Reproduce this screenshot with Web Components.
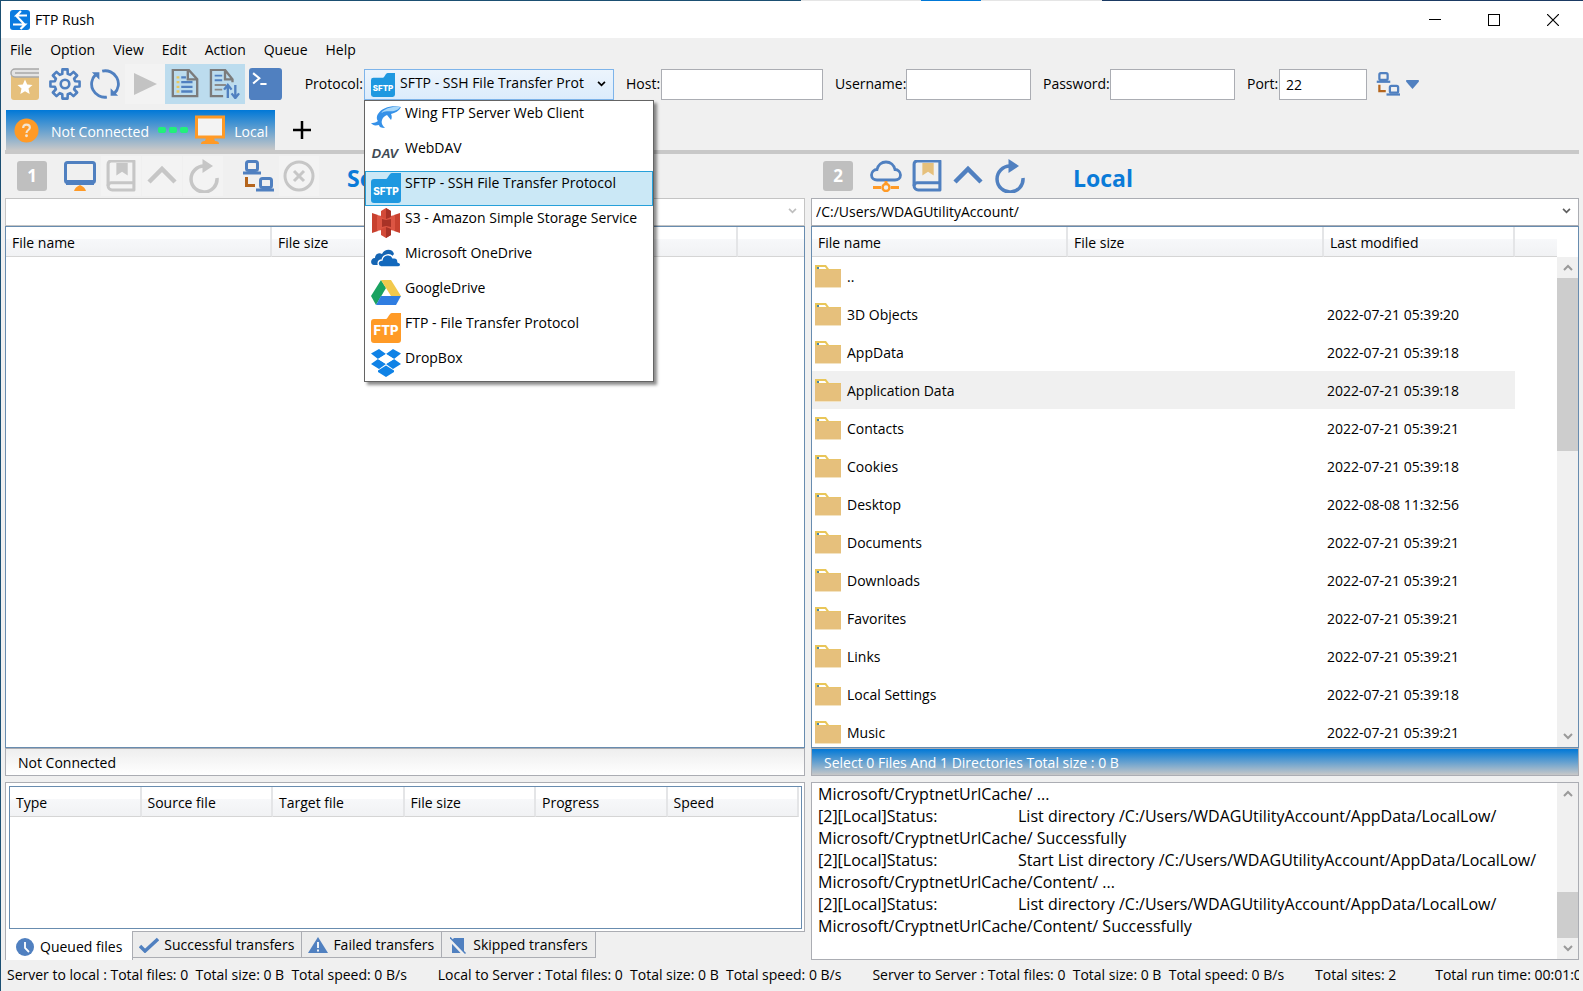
<!DOCTYPE html>
<html lang="en">
<head>
<meta charset="utf-8">
<title>FTP Rush</title>
<style>
  html, body { margin: 0; height: 100%; }
  body {
    font: 14px/20px "Open Sans", "Segoe UI", "Noto Sans", sans-serif;
    color: #000;
    background: #f0f0f0;
    overflow: hidden;
  }
</style>
</head>
<body>
<rush-window></rush-window>

<script>
const BLUE = '#5080c0', ORANGE = '#ff9a26', GREY = '#c6c6c6', TAN = '#e6c07c';

const bookmark = (c, m) => `
  <path d="M3 4a3 3 0 0 1 3-3h22v28H7a4 4 0 0 1-4-4V4z" fill="none" stroke="${c}" stroke-width="3" stroke-linejoin="round"/>
  <path d="M3 25a3 3 0 0 1 3-3h22" fill="none" stroke="${c}" stroke-width="3"/>
  <path d="M11 3h11v12l-5.500-3.500L11 15z" fill="${m}"/>`;
const reload = c => `
  <path d="M30 19a13 13 0 1 1-13-12" fill="none" stroke="${c}" stroke-width="3.500"/>
  <path d="M15.500 0l10.500 7-10.500 7z" fill="${c}"/>`;
const chevronUp = c => `<path d="M3 22L16 9l13 13" fill="none" stroke="${c}" stroke-width="4.500"/>`;
const folder = (c, label, size) => `
  <path d="M3 6h12c2 0 3-6 6-6h9v27a3 3 0 0 1-3 3H3a3 3 0 0 1-3-3V9a3 3 0 0 1 3-3z" fill="${c}"/>
  <text x="15" y="22" text-anchor="middle" font-family="Inter, sans-serif" font-weight="800" font-size="${size}" fill="#fff">${label}</text>`;
const badge = n => `
  <rect width="30" height="30" rx="3" fill="#bfbfbf"/>
  <text x="15" y="21" text-anchor="middle" font-family="Open Sans, sans-serif" font-weight="700" font-size="17" fill="#fff">${n}</text>`;
const pageShape = `<path d="M18 2H3v28h26V12L20 2h-2z" fill="none" stroke="#7b7b7b" stroke-width="2.500" transform="translate(0 -1)"/>
  <path d="M19 2v9h9" fill="none" stroke="#7b7b7b" stroke-width="2.500"/>`;

/* Outline of an eight-toothed cog centred in a 32-unit box. */
const cogPath = 'M' + Array.from({ length: 8 }, (_, i) =>
  [[-15, 10.5], [-10, 14.8], [10, 14.8], [15, 10.5]].map(([deg, r]) => {
    const a = (i * 45 + deg) * Math.PI / 180;
    return `${(16 + r * Math.sin(a)).toFixed(2)} ${(16 - r * Math.cos(a)).toFixed(2)}`;
  }).join('L')).join('L') + 'z';

/* name: [viewBox width, viewBox height, markup] */
const ICONS = {
  logo: [20, 20, `<rect width="20" height="20" rx="3" fill="#0a7be0"/>
    <path d="M17 5.500H6.500L11 1M6 5.500l8.500 9M3 14.500H15L10.500 19" fill="none" stroke="#fff" stroke-width="2.200"/>`],
  book: [32, 32, `<path d="M2 7h28v22a3 3 0 0 1-3 3H5a3 3 0 0 1-3-3z" fill="${TAN}"/>
    <path d="M30 1H6a4 4 0 0 0 0 8h24M30 5H6" fill="#e4e4e4" stroke="#a8a8a8" stroke-width="1.500"/>
    <path d="M16 11.500l2.200 5 5.300.500-4 3.600 1.200 5.400-4.700-2.800-4.700 2.800 1.200-5.400-4-3.600 5.300-.500z" fill="#fff"/>`],
  gear: [32, 32, `<path d="${cogPath}" fill="none" stroke="${BLUE}" stroke-width="2.600" stroke-linejoin="round"/>
    <circle cx="16" cy="16" r="4.300" fill="none" stroke="${BLUE}" stroke-width="2.600"/>`],
  sync: [32, 32, `<path d="M6 6A14 14 0 0 0 18 29.900M26 26A14 14 0 0 0 13 2.300" fill="none" stroke="${BLUE}" stroke-width="3"/>
    <path d="M2 3.500h8v8zM30 28.500h-8v-8z" fill="${BLUE}"/>`],
  play: [32, 32, `<path d="M5 5l23 11L5 27z" fill="#c3c3c3"/>`],
  list: [32, 32, `${pageShape}
    <path d="M7 9h3M7 14h3M7 19h3M7 24h3" stroke="#e8c860" stroke-width="2.500"/>
    <path d="M12 9h5M12 14h12M12 19h12M12 24h12" stroke="${BLUE}" stroke-width="2.500"/>`],
  listSort: [36, 32, `<path d="M16 29H3V1h15l8 10v3M18 2v9h8" fill="none" stroke="#7b7b7b" stroke-width="2.500"/>
    <path d="M7 7h8M7 12h8" stroke="${BLUE}" stroke-width="2"/><path d="M7 17h12M7 22h8" stroke="#8b8b8b" stroke-width="2"/>
    <path d="M21 31V18M17 22l4-5 4 5M29 17v13M25 26l4 5 4-5" fill="none" stroke="${BLUE}" stroke-width="2.500"/>`],
  terminal: [32, 32, `<rect width="32" height="31" rx="3" fill="${BLUE}"/>
    <path d="M4 5l6 5-6 5M11 15.500h6" fill="none" stroke="#fff" stroke-width="2"/>`],
  connect: [32, 32, `<g fill="none" stroke="${BLUE}" stroke-width="3">
    <rect x="4.500" y="1.500" width="11" height="9" rx="2"/><path d="M1 13h18"/>
    <rect x="18.500" y="18.500" width="11" height="9" rx="2"/><path d="M14 30h18"/></g>
    <path d="M4.500 17v8.500H13" fill="none" stroke="#b5651d" stroke-width="3"/>`],
  caret: [14, 10, `<path d="M0 0h14v2L7 10 0 2z" fill="${BLUE}"/>`],
  question: [26, 26, `<circle cx="13" cy="13" r="12.500" fill="${ORANGE}"/>
    <path d="M9.500 10.500c0-5 7-4.500 7-.500 0 2.500-3.500 2.500-3.500 5.500" fill="none" stroke="#f3e4d0" stroke-width="2.200"/><circle cx="13" cy="18.500" r="1.500" fill="#f3e4d0"/>`],
  dashes: [30, 6, `<g fill="#22f07a"><rect width="8" height="6" rx="2"/><rect x="11" width="8" height="6" rx="2"/><rect x="22" width="8" height="6" rx="2"/></g>`],
  monitorOrange: [30, 30, `<rect x="1.500" y="2" width="27" height="20" fill="#f3f3f3" stroke="${ORANGE}" stroke-width="3"/>
    <path d="M11 23h8l1 3c3 0 4 1 4 3H6c0-2 1-3 4-3z" fill="${ORANGE}"/>`],
  plus: [18, 18, `<path d="M9 0v18M0 9h18" stroke="#000" stroke-width="2.500"/>`],
  one: [30, 30, badge(1)],
  two: [30, 30, badge(2)],
  monitor: [32, 30, `<rect x="1.500" y="1.500" width="29" height="20" rx="2" fill="none" stroke="${BLUE}" stroke-width="3"/><path d="M2 19h28v5H2z" fill="${BLUE}"/>
    <path d="M10 30q1-4 6-6 5 2 6 6z" fill="${ORANGE}"/>`],
  bookmarkOff: [31, 31, bookmark(GREY, GREY)],
  bookmark: [31, 31, bookmark(BLUE, TAN)],
  upOff: [32, 32, chevronUp(GREY)],
  up: [32, 32, chevronUp(BLUE)],
  reloadOff: [32, 34, reload(GREY)],
  reload: [32, 34, reload(BLUE)],
  cancel: [32, 32, `<circle cx="16" cy="16" r="14" fill="none" stroke="${GREY}" stroke-width="3"/><path d="M11 11l10 10M21 11L11 21" stroke="${GREY}" stroke-width="3"/>`],
  cloud: [32, 32, `<path d="M7 20c-3 0-5.500-2-5.500-5S4 9.500 7 9.500C8 5 11.500 2 16 2s8 3 9 7.500c3 0 5.500 2.500 5.500 5.500s-2.500 5-5.500 5z" fill="none" stroke="${BLUE}" stroke-width="2.800"/>
    <path d="M16 21v3M3 27.500h8M21 27.500h8" stroke="${ORANGE}" stroke-width="3"/><circle cx="16" cy="27.500" r="3.500" fill="none" stroke="${ORANGE}" stroke-width="2.500"/>`],
  folder: [26, 23, `<path d="M0 0h11l3 4h12v19H0z" fill="#e9c659"/><path d="M2 2h8l1.500 2H2z" fill="#fff"/><path d="M2 2h2v2H2z" fill="#4b87a8"/>
    <path d="M0 4.500h26V23H0z" fill="#e6c07c"/><path d="M0 22h26v1H0z" fill="#f3e3c2"/>`],
  sftp: [30, 30, folder('#1e98e0', 'SFTP', 10)],
  ftp: [30, 30, folder(ORANGE, 'FTP', 13)],
  wing: [30, 30, `<path d="M30 4C22 2 11 4 7 11c-2 3-1 6 0 7-3 2-5 2-7 2 2 2 3 3 8 2 0 2 2 3 6 3-3-3-4-5-3-8 1-3 3-4 5-5l4 5c1-2 1-4 0-6 4-1 8-3 10-7z" fill="#3591e8"/>
    <path d="M29 4c-7-1-15 1-19 6 6-3 10-1 13-2 3-1 5-2 6-4z" fill="#a8d8fa"/>`],
  dav: [30, 30, `<text x="14" y="20" text-anchor="middle" font-family="Liberation Sans, sans-serif" font-style="italic" font-weight="700" font-size="13" fill="#3f4b55">DAV</text>`],
  s3: [30, 30, `<path d="M1 5l6 2v16l-6 2zM29 5l-6 2v16l6 2z" fill="#c8412f"/><path d="M6 7l9 2 9-2v16l-9-2-9 2z" fill="#dc5543"/>
    <path d="M10 3l5-3 5 3v6l-5 2-5-2zM10 27l5 3 5-3v-6l-5-2-5 2z" fill="#d24a38"/><path d="M15 0l5 3v6l-5 2zM15 30l5-3v-6l-5-2zM11 11l4 1v6l-4 1zM15 12l5-1v8l-5-1z" fill="#a83226"/>`],
  onedrive: [30, 30, `<path d="M3 22c-4 0-4-7 1-7 0-4 4-6 7-4 3-6 11-5 12 0l-9 11z" fill="#1565b3"/>
    <path d="M10 24c-4-1-4-7 1-7 1-6 9-7 11-2 3-1 5 1 5 4 4 1 3 5 0 5z" fill="#1369bd" stroke="#fff" stroke-width="1.300"/>`],
  gdrive: [30, 30, `<path d="M10 2L0 18l5 9L15 10z" fill="#1aa260"/><path d="M10 2h10l10 16H20z" fill="#f2c94c"/><path d="M30 18l-5 9H5l5-9z" fill="#2f7de1"/>`],
  dropbox: [30, 30, `<g fill="#0f82e6"><path d="M8 1l7 5-8 5-7-5.500zM22 1l8 4.500L23 11l-8-5zM0 16l7-5 8 5-7 5zM30 16l-7-5-8 5 7 5zM7 22.500l8-5 8 5v1.500l-8 5-8-5z"/></g>
    <path d="M15 6l8 5-8 5-8-5z" fill="#fff"/>`],
  clock: [18, 18, `<circle cx="9" cy="9" r="9" fill="${BLUE}"/><path d="M9 4v6l4 4" fill="none" stroke="#fff" stroke-width="1.800"/>`],
  check: [20, 16, `<path d="M1 9l5 5L19 2" fill="none" stroke="${BLUE}" stroke-width="3.500"/>`],
  warn: [20, 16, `<path d="M10 0l10 16H0z" fill="${BLUE}"/><path d="M10 5v6M10 12.500v2" stroke="#fff" stroke-width="1.800"/>`],
  skip: [16, 17, `<path d="M4 1h10v15H2V3z" fill="${BLUE}"/><path d="M-1 1.500l15 16" stroke="#f0f0f0" stroke-width="3"/><path d="M0 .500l15.500 16" stroke="${BLUE}" stroke-width="1.500"/>`],
  down: [10, 7, `<path d="M1 1l4 4 4-4" fill="none" stroke="currentColor" stroke-width="2"/>`],
  upSmall: [10, 7, `<path d="M1 6l4-4 4 4" fill="none" stroke="currentColor" stroke-width="2"/>`],
  minimize: [12, 12, `<path d="M0 5.500h12" stroke="#000"/>`],
  maximize: [12, 12, `<rect x=".5" y=".5" width="11" height="11" fill="none" stroke="#000"/>`],
  close: [12, 12, `<path d="M0 0l12 12M12 0L0 12" stroke="#000" stroke-width="1.200"/>`],
};

const BASE = `*, *::before { box-sizing: border-box; }
  button, input, select { font: inherit; color: inherit; margin: 0; }
  button { border: 0; padding: 0; background: none; display: flex; align-items: center; justify-content: center; }`;

function element(name, css, html) {
  customElements.define(name, class extends HTMLElement {
    constructor() {
      super();
      const root = this.attachShadow({ mode: 'open' });
      const t = document.createElement('template');
      this.render = () => {
        t.innerHTML = `<style>${BASE}${css}</style>${typeof html === 'function' ? html(this) : html}`;
        root.replaceChildren(t.content.cloneNode(true));
      };
    }
    connectedCallback() { this.render(); }
  });
}

element('rush-icon', `
  :host { display: block; flex: none; }
  svg { display: block; }`,
  el => {
    const [w, h, body] = ICONS[el.getAttribute('name')];
    const width = +(el.getAttribute('width') || w);
    return `<svg width="${width}" height="${Math.round(h * width / w)}" viewBox="0 0 ${w} ${h}" aria-hidden="true">${body}</svg>`;
  });

element('rush-titlebar', `
  :host { display: flex; align-items: center; height: 37px; padding: 0 1px 0 9px; background: #fff; }
  h1 { font: inherit; margin: 0 auto 0 5px; }
  button { width: 59px; height: 36px; }`,
  `<rush-icon name="logo"></rush-icon><h1>FTP Rush</h1>
   <button aria-label="Minimize"><rush-icon name="minimize"></rush-icon></button>
   <button aria-label="Maximize"><rush-icon name="maximize"></rush-icon></button>
   <button aria-label="Close"><rush-icon name="close"></rush-icon></button>`);

element('rush-menubar', `
  :host { display: flex; height: 24px; }
  button { padding: 0 9px; }`,
  ['File', 'Option', 'View', 'Edit', 'Action', 'Queue', 'Help'].map(t => `<button>${t}</button>`).join(''));

element('tool-button', `
  :host { display: block; flex: none; width: var(--w, 40px); height: 40px; }
  button { width: 100%; height: 100%; }
  :host([pressed]) button { background: #bcdcee; }
  button:disabled { background: #f3f3f3; }`,
  el => `<button aria-label="${el.getAttribute('label')}" ${el.hasAttribute('disabled') ? 'disabled' : ''} ${el.hasAttribute('pressed') ? 'aria-pressed="true"' : ''}><rush-icon name="${el.getAttribute('icon')}" width="${el.getAttribute('size') || 32}"></rush-icon></button>`);

element('rush-field', `
  :host { display: flex; align-items: center; flex: none; gap: 1px; }
  label { width: var(--label); text-align: right; white-space: nowrap; }
  input { width: var(--field); height: 31px; border: 1px solid #abadb3; background: #fff; padding: 0 6px; outline: 0; }`,
  el => `<label for="f">${el.getAttribute('label')}</label><input id="f" type="${el.getAttribute('type') || 'text'}" value="${el.getAttribute('value') || ''}">`);

const PROTOCOLS = [['wing', 'Wing FTP Server Web Client'], ['dav', 'WebDAV'], ['sftp', 'SFTP - SSH File Transfer Protocol'],
  ['s3', 'S3 - Amazon Simple Storage Service'], ['onedrive', 'Microsoft OneDrive'], ['gdrive', 'GoogleDrive'],
  ['ftp', 'FTP - File Transfer Protocol'], ['dropbox', 'DropBox']];

element('protocol-picker', `
  :host { display: flex; align-items: center; flex: none; gap: 1px; }
  label { width: 59px; text-align: right; white-space: nowrap; }
  .box { position: relative; width: 250px; height: 31px; }
  select { appearance: none; width: 100%; height: 31px; border: 1px solid #7eb4ea; border-radius: 0; outline: 0;
    padding: 0 20px 2px 35px; background: linear-gradient(#ecf4fc, #dcecfc); }
  .box > rush-icon { position: absolute; left: 7px; top: 4px; pointer-events: none; }
  .box > .arrow { left: auto; right: 8px; top: 12px; }
  ul { position: absolute; z-index: 5; left: 0; top: 31px; width: 290px; margin: 0; padding: 0; list-style: none;
    background: #fff; border: 1px solid #646464; box-shadow: 3px 3px 3px rgba(0,0,0,.45); }
  li { display: flex; gap: 4px; height: 35px; padding: 2px 6px; white-space: nowrap; border: 0 solid #26a0da; }
  li[aria-selected=true] { background: #cbe8f6; border-width: 1px; padding: 1px 5px; }`,
  `<label for="p">Protocol:</label>
   <div class="box">
     <select id="p"><option>SFTP - SSH File Transfer Prot</option></select>
     <rush-icon name="sftp" width="24"></rush-icon><rush-icon class="arrow" name="down" width="9"></rush-icon>
     <ul role="listbox" aria-label="Protocols">${PROTOCOLS.map(([i, t]) =>
       `<li role="option" aria-selected="${i === 'sftp'}"><rush-icon name="${i}"></rush-icon><span>${t}</span></li>`).join('')}</ul>
   </div>`);

element('rush-toolbar', `
  :host { display: flex; align-items: center; height: 40px; margin-top: 2px; padding-left: 4px; }
  .tools { display: flex; margin-right: 19px; }
  .fields { display: flex; gap: 12px; margin-right: 9px; }
  .connect { gap: 6px; }`,
  `<div class="tools">
     <tool-button icon="book" label="Site manager"></tool-button>
     <tool-button icon="gear" label="Settings"></tool-button>
     <tool-button icon="sync" label="Synchronize" size="30"></tool-button>
     <tool-button icon="play" label="Start" disabled></tool-button>
     <tool-button icon="list" label="Log" pressed size="30"></tool-button>
     <tool-button icon="listSort" label="Transfer queue" pressed size="34"></tool-button>
     <tool-button icon="terminal" label="Console" size="33"></tool-button>
   </div>
   <div class="fields">
     <protocol-picker></protocol-picker>
     <rush-field label="Host:" style="--label:34px;--field:162px"></rush-field>
     <rush-field label="Username:" style="--label:70px;--field:125px"></rush-field>
     <rush-field label="Password:" type="password" style="--label:66px;--field:125px"></rush-field>
     <rush-field label="Port:" value="22" style="--label:31px;--field:88px"></rush-field>
   </div>
   <button class="connect" aria-label="Connect"><rush-icon name="connect" width="24"></rush-icon><rush-icon name="caret" width="13"></rush-icon></button>`);

element('session-tabs', `
  :host { display: flex; height: 44px; margin: 6px 4px 0; border-bottom: 4px solid #c8c8c8; }
  .tab { color: #fff; background: linear-gradient(#0078d7, #c8c8c8); height: 40px; width: 269px; margin-left: 1px; padding: 0 7px 0 8px; justify-content: flex-start; }
  .tab span { line-height: 20px; padding-top: 3px; }
  .tab span:first-of-type { margin: 0 auto 0 12px; }
  .tab span:last-of-type { margin-left: auto; }
  .add { width: 54px; }`,
  `<button class="tab"><rush-icon name="question" width="25"></rush-icon><span>Not Connected</span>
     <rush-icon name="dashes"></rush-icon><rush-icon name="monitorOrange" style="margin-left:7px"></rush-icon><span>Local</span></button>
   <button class="add" aria-label="New tab"><rush-icon name="plus"></rush-icon></button>`);

element('pane-toolbar', `
  :host { display: flex; align-items: center; height: 44px; gap: 1px; }
  .no { margin: 0 12px 0 12px; }
  ::slotted(h2) { margin: 0; font-size: 23px; line-height: 30px; font-weight: 700; color: #0a7bd8; padding-top: 3px; }`,
  el => `<rush-icon class="no" name="${el.getAttribute('no')}"></rush-icon><slot></slot>`);

element('path-box', `
  :host { display: block; position: relative; height: 28px; color: #000; }
  select { appearance: none; width: 100%; height: 28px; border: 1px solid #abadb3; border-radius: 0; background: #fff; padding: 0 24px 0 4px; outline: 0; opacity: 1; }
  rush-icon { position: absolute; right: 8px; top: 10px; color: #606060; pointer-events: none; }
  select:disabled { border-color: #c4c4c4; }
  select:disabled + rush-icon { color: #bfbfbf; }`,
  el => `<select aria-label="Path" ${el.hasAttribute('disabled') ? 'disabled' : ''}><option>${el.getAttribute('value') || ''}</option></select><rush-icon name="down" width="9"></rush-icon>`);

element('scroll-bar', `
  :host { display: grid; width: 21px; background: #f0f0f0; color: #9a9a9a; grid-template-rows: 21px var(--before) var(--thumb) var(--after) 21px; }
  .thumb { grid-row: 3; background: #cdcdcd; }
  button:last-child { grid-row: 5; }`,
  `<button aria-label="Scroll up"><rush-icon name="upSmall"></rush-icon></button><div class="thumb"></div>
   <button aria-label="Scroll down"><rush-icon name="down"></rush-icon></button>`);

const TABLE = `
  table { border-collapse: separate; border-spacing: 0; table-layout: fixed; width: 100%; }
  th { height: 30px; padding: 3px 6px 0; font-weight: 400; text-align: left; white-space: nowrap;
    background: linear-gradient(#fff 40%, #f7f8fa 40%, #f1f2f4); border-right: 2px solid #e4e5e7; border-bottom: 1px solid #d5d5d5; }
  th:last-child { border-right: 0; }
  td { height: 38px; padding: 0 0 0 3px; white-space: nowrap; }`;

const FILES = [['..', ''], ['3D Objects', '2022-07-21 05:39:20'], ['AppData', '2022-07-21 05:39:18'], ['Application Data', '2022-07-21 05:39:18'],
  ['Contacts', '2022-07-21 05:39:21'], ['Cookies', '2022-07-21 05:39:18'], ['Desktop', '2022-08-08 11:32:56'], ['Documents', '2022-07-21 05:39:21'],
  ['Downloads', '2022-07-21 05:39:21'], ['Favorites', '2022-07-21 05:39:21'], ['Links', '2022-07-21 05:39:21'],
  ['Local Settings', '2022-07-21 05:39:18'], ['Music', '2022-07-21 05:39:21']];

element('file-list', `${TABLE}
  :host { display: grid; grid-template: 30px 1fr / 1fr auto; flex: 1; min-height: 0; overflow: hidden; background: #fff; border: 1px solid #688caf; }
  .view { grid-row: 1 / 3; overflow: hidden; min-height: 0; }
  scroll-bar { grid-row: 2; --before: 0px; --thumb: 173fr; --after: 275fr; }
  .name { display: flex; align-items: center; gap: 6px; }
  .name span { padding-top: 2px; }
  td { padding-top: 2px; }
  td:first-child { padding-top: 0; }
  tr.hot td:not(:last-child) { background: #f0f0f0; }`,
  el => {
    const local = el.hasAttribute('local');
    const cols = local ? [256, 256, 191, 0] : [266, 266, 200, 0];
    const heads = ['File name', 'File size', local ? 'Last modified' : '', ''];
    return `<div class="view"><table><colgroup>${cols.map(c => `<col${c ? ` style="width:${c}px"` : ''}>`).join('')}</colgroup>
      <thead><tr>${heads.map(h => `<th scope="col">${h}</th>`).join('')}</tr></thead>
      <tbody>${local ? FILES.map(([n, d]) => `<tr${n === 'Application Data' ? ' class="hot"' : ''}><td><div class="name"><rush-icon name="folder"></rush-icon><span>${n}</span></div></td><td></td><td>${d}</td><td></td></tr>`).join('') : ''}</tbody>
      </table></div>${local ? '<scroll-bar></scroll-bar>' : ''}`;
  });

element('pane-status', `
  :host { display: block; height: 28px; box-sizing: border-box; padding: 4px 12px 0; border: 1px solid #abadb3; background: linear-gradient(#eee, #fff); white-space: nowrap; }
  :host([active]) { color: #fff; background: linear-gradient(#0078d7, #c8c8c8); }
  `, `<slot></slot>`);

element('file-pane', `
  :host { display: flex; flex-direction: column; min-height: 0; min-width: 0; }`, `<slot></slot>`);

element('transfer-queue', `${TABLE}
  :host { display: flex; flex-direction: column; min-width: 0; }
  .frame { flex: 1; border: 1px solid #abadb3; background: #fff; padding: 3px 2px 2px 3px; }
  .list { height: 100%; border: 1px solid #688caf; padding-right: 2px; }
  th:last-child { border-right: 2px solid #e4e5e7; }
  .tabs { display: flex; align-items: flex-start; height: 28px; }
  .tabs button { height: 26px; gap: 5px; padding: 1px 7px 0 6px; border: 1px solid #abadb3; border-top: 0; margin-right: -1px; background: #ececec; white-space: nowrap; }
  .tabs button.on { height: 29px; margin-top: -1px; gap: 6px; padding: 3px 10px 0; background: #fff; border-bottom: 0; margin-right: 0; position: relative; }
  .tabs .on + button { border-left: 0; }`,
  `<div class="frame"><div class="list"><table><thead><tr>${['Type', 'Source file', 'Target file', 'File size', 'Progress', 'Speed'].map(h => `<th scope="col">${h}</th>`).join('')}</tr></thead></table></div></div>
   <div class="tabs" role="tablist">
     <button class="on" role="tab"><rush-icon name="clock"></rush-icon>Queued files</button>
     <button role="tab"><rush-icon name="check"></rush-icon>Successful transfers</button>
     <button role="tab"><rush-icon name="warn"></rush-icon>Failed transfers</button>
     <button role="tab"><rush-icon name="skip" style="margin:0 2px"></rush-icon>Skipped transfers</button>
   </div>`);

const LOG = [[null, 'Microsoft/CryptnetUrlCache/ ...'], ['[2][Local]Status:', 'List directory /C:/Users/WDAGUtilityAccount/AppData/LocalLow/'],
  [null, 'Microsoft/CryptnetUrlCache/ Successfully'], ['[2][Local]Status:', 'Start List directory /C:/Users/WDAGUtilityAccount/AppData/LocalLow/'],
  [null, 'Microsoft/CryptnetUrlCache/Content/ ...'], ['[2][Local]Status:', 'List directory /C:/Users/WDAGUtilityAccount/AppData/LocalLow/'],
  [null, 'Microsoft/CryptnetUrlCache/Content/ Successfully']];

element('log-view', `
  :host { display: grid; grid-template-columns: 1fr auto; border: 1px solid #abadb3; background: #fff; min-width: 0; font-size: 16px; line-height: 22px; }
  .lines { padding: 0 6px; overflow: hidden; white-space: nowrap; }
  .lines div { display: flex; }
  b { font-weight: 400; width: 200px; flex: none; }
  scroll-bar { --before: 88fr; --thumb: 46fr; --after: 0px; }`,
  `<div class="lines" role="log">${LOG.map(([a, b]) => `<div>${a ? `<b>${a}</b>` : ''}<span>${b}</span></div>`).join('')}</div><scroll-bar></scroll-bar>`);

element('rush-statusbar', `
  :host { display: flex; gap: 31px; height: 31px; margin: 0 4px 0 6px; padding-top: 5px; overflow: hidden; white-space: pre; }
  span { flex: none; }
  span:nth-last-child(2) { margin-right: 8px; }`,
  ['Server to local : Total files: 0  Total size: 0 B  Total speed: 0 B/s', 'Local to Server : Total files: 0  Total size: 0 B  Total speed: 0 B/s',
   'Server to Server : Total files: 0  Total size: 0 B  Total speed: 0 B/s', 'Total sites: 2', 'Total run time: 00:01:0'].map(t => `<span>${t}</span>`).join(''));

element('rush-window', `
  :host { display: flex; flex-direction: column; height: 100vh; box-sizing: border-box; overflow: hidden; border-left: 1px solid #1b4f72; background: #f0f0f0; }
  .edge { flex: none; height: 1px; background: linear-gradient(90deg, #1b4f72 800px, #e5e5e5 800px 920px, #0078d7 920px 980px, #e5e5e5 980px 1101px, #1b3a63 1101px); }
  rush-titlebar, rush-menubar, rush-toolbar, session-tabs, rush-statusbar { flex: none; }
  main { flex: 1; min-height: 0; display: grid; grid-template: 1fr 178px / 25fr 24fr; gap: 6px; margin: 0 4px; }`,
  `<div class="edge"></div>
   <rush-titlebar></rush-titlebar>
   <rush-menubar></rush-menubar>
   <rush-toolbar></rush-toolbar>
   <session-tabs></session-tabs>
   <main>
     <file-pane>
       <pane-toolbar no="one">
         <tool-button icon="monitor" label="Local computer"></tool-button>
         <tool-button icon="bookmarkOff" label="Bookmarks" disabled></tool-button>
         <tool-button icon="upOff" label="Parent folder" disabled></tool-button>
         <tool-button icon="reloadOff" label="Refresh" disabled></tool-button>
         <tool-button icon="connect" label="Connect" style="margin-left:14px"></tool-button>
         <tool-button icon="cancel" label="Abort" disabled></tool-button>
         <h2 style="margin-left:27px">Server</h2>
       </pane-toolbar>
       <path-box disabled></path-box>
       <file-list></file-list>
       <pane-status>Not Connected</pane-status>
     </file-pane>
     <file-pane>
       <pane-toolbar no="two">
         <tool-button icon="cloud" label="Remote"></tool-button>
         <tool-button icon="bookmark" label="Bookmarks"></tool-button>
         <tool-button icon="up" label="Parent folder"></tool-button>
         <tool-button icon="reload" label="Refresh"></tool-button>
         <h2 style="margin-left:43px">Local</h2>
       </pane-toolbar>
       <path-box value="/C:/Users/WDAGUtilityAccount/"></path-box>
       <file-list local></file-list>
       <pane-status active>Select 0 Files And 1 Directories Total size : 0 B</pane-status>
     </file-pane>
     <transfer-queue></transfer-queue>
     <log-view></log-view>
   </main>
   <rush-statusbar></rush-statusbar>`);
</script>
</body>
</html>
